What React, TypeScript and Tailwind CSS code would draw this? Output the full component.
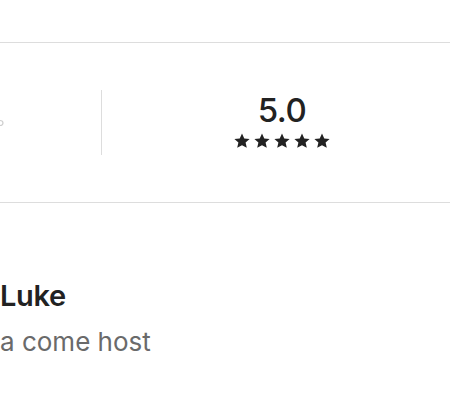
function Stars() {
  return (
    <div className="flex items-center gap-[4px]">
      {[0, 1, 2, 3, 4].map((i) => (
        <svg key={i} viewBox="0 0 24 24" className="h-[16px] w-[16px] fill-[#222222]">
          <path d="M12 .8l3.4 7.3 8 .8-6 5.5 1.8 7.9L12 18.2l-7.2 4.1 1.8-7.9-6-5.5 8-.8z" />
        </svg>
      ))}
    </div>
  );
}

export default function App() {
  return (
    <div className="h-[408px] w-[450px] overflow-hidden bg-white font-['Inter',sans-serif] text-[#222222]">
      <div className="h-[42px]" />

      {/* Guest favourite strip */}
      <div className="flex h-[161px] items-center border-y border-[#dddddd]">
        <div className="flex w-[101px] shrink-0 justify-start">
          <svg viewBox="0 0 4 8" className="h-[8px] w-[4px]">
            <path d="M0 1.5c2 0 3 1 3 2.5S2 6.5 0 6.5" fill="none" stroke="#cfcfcf" strokeWidth="1.2" />
          </svg>
        </div>
        <div className="h-[65px] w-px shrink-0 bg-[#dddddd]" />
        <div className="-mt-[4px] flex w-[360px] shrink-0 flex-col items-center">
          <div className="text-[33px] font-medium leading-[36px] tracking-[-0.5px]">5.0</div>
          <div className="mt-[5px]">
            <Stars />
          </div>
        </div>
      </div>

      {/* Host */}
      <div className="pt-[77px]">
        <h2 className="text-[29px] font-semibold leading-[32px] tracking-[-0.3px]">Luke</h2>
        <p className="mt-[15px] text-[26px] leading-[30px] text-[#6a6a6a]">a come host</p>
      </div>
    </div>
  );
}
